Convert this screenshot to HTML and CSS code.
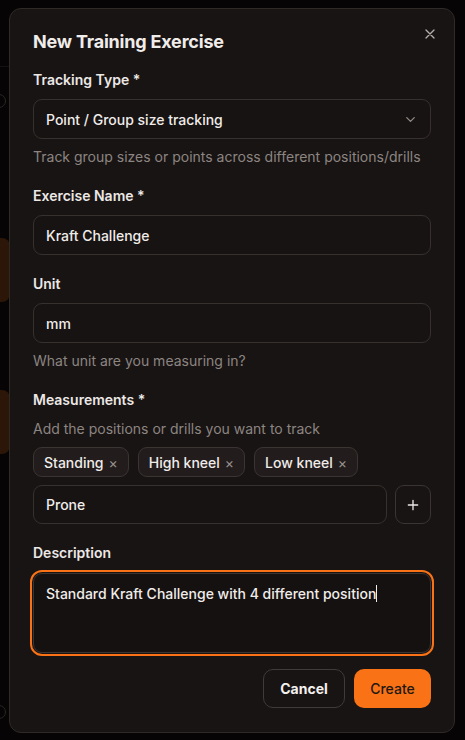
FILE: index.html
```html
<!DOCTYPE html>
<html lang="en">
<head>
<meta charset="utf-8">
<title>New Training Exercise</title>
<link rel="stylesheet" href="styles.css">
</head>
<body>
<div class="backdrop">
  <div class="bg-line bg-line-1"></div>
  <div class="bg-ring bg-ring-1"></div>
  <div class="bg-block bg-block-1"></div>
  <div class="bg-block bg-block-2"></div>
  <div class="bg-ring bg-ring-2"></div>
</div>
<div class="dialog">
  <button class="close" aria-label="Close">
    <svg width="16" height="16" viewBox="0 0 24 24" fill="none" stroke="currentColor" stroke-width="2" stroke-linecap="round"><path d="M18 6 6 18M6 6l12 12"/></svg>
  </button>
  <h2 class="title">New Training Exercise</h2>

  <div class="group g-first">
    <div class="label">Tracking Type *</div>
    <div class="field select">
      <span>Point / Group size tracking</span>
      <svg class="chev" width="16" height="16" viewBox="0 0 24 24" fill="none" stroke="currentColor" stroke-width="2" stroke-linecap="round" stroke-linejoin="round"><path d="m6 9 6 6 6-6"/></svg>
    </div>
    <div class="help">Track group sizes or points across different positions/drills</div>
  </div>

  <div class="group">
    <div class="label">Exercise Name *</div>
    <div class="field">Kraft Challenge</div>
  </div>

  <div class="group">
    <div class="label">Unit</div>
    <div class="field">mm</div>
    <div class="help">What unit are you measuring in?</div>
  </div>

  <div class="group">
    <div class="label">Measurements *</div>
    <div class="help help-top">Add the positions or drills you want to track</div>
    <div class="chips">
      <span class="chip">Standing <span class="chip-x">×</span></span>
      <span class="chip">High kneel <span class="chip-x">×</span></span>
      <span class="chip">Low kneel <span class="chip-x">×</span></span>
    </div>
    <div class="add-row">
      <div class="field grow">Prone</div>
      <button class="plus" aria-label="Add">
        <svg width="16" height="16" viewBox="0 0 24 24" fill="none" stroke="currentColor" stroke-width="2" stroke-linecap="round"><path d="M12 5v14M5 12h14"/></svg>
      </button>
    </div>
  </div>

  <div class="group">
    <div class="label">Description</div>
    <div class="textarea">Standard Kraft Challenge with 4 different position<span class="caret"></span></div>
  </div>

  <div class="actions">
    <button class="btn cancel">Cancel</button>
    <button class="btn create">Create</button>
  </div>
</div>
</body>
</html>
```
FILE: styles.css
```css
* { box-sizing: border-box; }
html, body { margin: 0; padding: 0; }
body {
  width: 465px;
  height: 740px;
  background: #060404;
  font-family: Inter, "Noto Sans", sans-serif;
  color: #ece8e6;
  position: relative;
  overflow: hidden;
}
.backdrop { position: absolute; inset: 0; }
.bg-line { position: absolute; left: 0; width: 40px; height: 1px; background: #141110; }
.bg-line-1 { top: 66px; }
.bg-block { position: absolute; left: -30px; width: 40px; border-radius: 8px; background: #2c1607; }
.bg-block-1 { top: 238px; height: 64px; }
.bg-block-2 { top: 390px; height: 64px; }
.bg-ring { position: absolute; left: -8px; width: 14px; height: 14px; border-radius: 50%; border: 1.5px solid #2a2624; }
.bg-ring-1 { top: 94px; }
.bg-ring-2 { top: 705px; }

.dialog {
  position: absolute;
  left: 9px;
  top: 8px;
  width: 446px;
  height: 725px;
  background: #181413;
  border: 1px solid #2f2a28;
  border-radius: 12px;
  padding: 23px 23px 23px 23px;
  display: flex;
  flex-direction: column;
}
.close {
  position: absolute;
  right: 16px;
  top: 17px;
  width: 16px;
  height: 16px;
  padding: 0;
  border: 0;
  background: transparent;
  color: #b3adaa;
  display: flex;
}
.title {
  margin: 0;
  font-size: 18px;
  line-height: 20px;
  font-weight: 700;
  color: #f0ecea;
  letter-spacing: -0.2px;
}
.group { display: flex; flex-direction: column; margin-top: 19px; }
.g-first { margin-top: 18px; }
.label {
  font-size: 14px;
  line-height: 20px;
  font-weight: 600;
  color: #ece8e6;
  margin-bottom: 9px;
}
.field {
  height: 40px;
  border: 1px solid #36302e;
  border-radius: 9px;
  padding: 0 12px;
  display: flex;
  align-items: center;
  font-size: 14px;
  font-weight: 500;
  color: #f0ecea;
  background: #171312;
}
.select { justify-content: space-between; padding-right: 12px; }
.chev { color: #948d8a; width: 15px; height: 15px; }
.help {
  margin-top: 8px;
  font-size: 14px;
  line-height: 20px;
  color: #8c8582;
}
.help-top { margin-top: 0; margin-bottom: 8px; }
.chips { display: flex; gap: 9px; margin-bottom: 8px; }
.chip {
  height: 30px;
  display: inline-flex;
  align-items: center;
  padding: 0 10px 0 10px;
  border: 1px solid #3a3432;
  border-radius: 9px;
  background: #221d1c;
  font-size: 14px;
  font-weight: 500;
  color: #f0ecea;
}
.chip-x { margin-left: 5px; color: #9a9390; font-size: 14px; font-weight: 400; }
.add-row { display: flex; gap: 8px; }
.grow { flex: 1; height: 39px; }
.plus {
  width: 36px;
  height: 39px;
  border: 1.5px solid #3a3432;
  border-radius: 9px;
  background: #181413;
  color: #ece8e6;
  display: flex;
  align-items: center;
  justify-content: center;
  padding: 0;
}
.label + .textarea { margin-top: 1px; }
.textarea {
  height: 80px;
  border: 1px solid #3a3432;
  border-radius: 9px;
  padding: 10px 12px;
  font-size: 14px;
  line-height: 20px;
  font-weight: 500;
  color: #f0ecea;
  background: #151110;
  outline: 2px solid #f97316;
  outline-offset: 1px;
}
.caret {
  display: inline-block;
  width: 1px;
  height: 17px;
  background: #f0ecea;
  vertical-align: -3px;
}
.actions {
  margin-top: 16px;
  display: flex;
  justify-content: flex-end;
  gap: 9px;
}
.btn {
  height: 39px;
  border-radius: 10px;
  font-family: Inter, "Noto Sans", sans-serif;
  font-size: 14px;
  font-weight: 600;
  padding: 0;
}
.cancel {
  width: 82px;
  background: #181413;
  border: 1.5px solid #403a38;
  color: #f4f0ee;
  font-weight: 700;
}
.create {
  width: 77px;
  background: #f97316;
  border: 0;
  color: #221712;
  font-weight: 500;
}
```
